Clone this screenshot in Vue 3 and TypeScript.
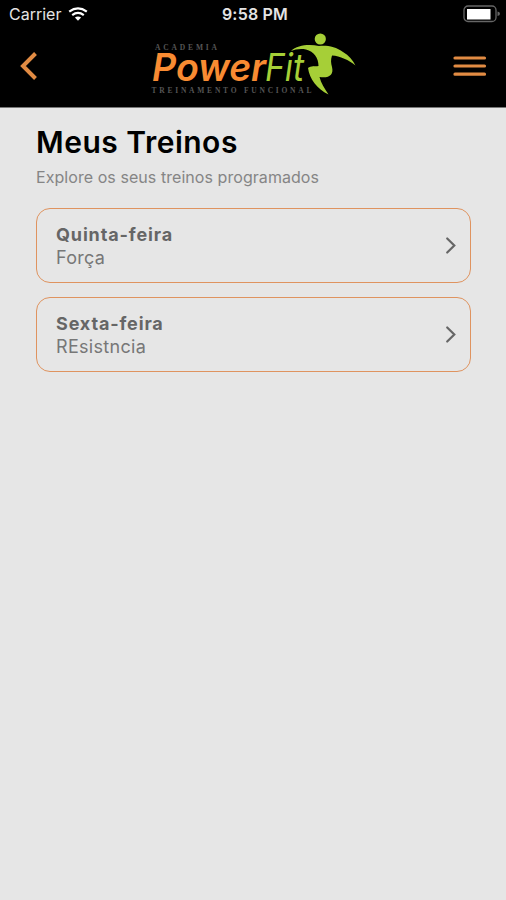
<script setup lang="ts">
interface Workout {
  day: string
  name: string
}

const workouts: Workout[] = [
  { day: 'Quinta-feira', name: 'Força' },
  { day: 'Sexta-feira', name: 'REsistncia' },
]
</script>

<template>
  <div class="screen">
    <header class="top">
      <div class="status">
        <div class="carrier">
          <span>Carrier</span>
          <svg class="wifi" width="20" height="15" viewBox="0 0 20 15">
            <path d="M1.200 4.700Q10-1.800 18.800 4.700" />
            <path d="M4.200 8.100Q10 3.700 15.800 8.100" />
            <path class="dot" d="M6.900 10.500Q10 8.300 13.100 10.500L10 13.700Z" />
          </svg>
        </div>
        <span class="clock">9:58 PM</span>
        <svg class="battery" width="38" height="18" viewBox="0 0 38 18">
          <rect class="shell" x="1" y="1" width="32" height="15.500" rx="4" />
          <rect class="charge" x="4" y="4" width="23.500" height="10.500" />
          <path class="cap" d="M34.500 6.500Q37 7 37 8.700T34.500 11Z" />
        </svg>
      </div>
      <nav class="bar">
        <button class="icon-button" aria-label="Voltar">
          <svg width="20" height="30" viewBox="0 0 20 30">
            <path class="back" d="M18.500 2.500L6 15L18.500 27.500" />
          </svg>
        </button>
        <svg class="logo" width="208" height="68" viewBox="150 30 208 68">
          <text class="small" x="155" y="49.500" textLength="62">ACADEMIA</text>
          <text class="power" x="152" y="81" textLength="114" lengthAdjust="spacingAndGlyphs">Power</text>
          <text class="fit" x="265" y="81" textLength="39" lengthAdjust="spacingAndGlyphs">Fit</text>
          <text class="small" x="151.500" y="92.500" textLength="160">TREINAMENTO FUNCIONAL</text>
          <circle class="runner" cx="320.300" cy="39" r="5.600" />
          <path class="runner" d="M291 51C297 45 309 44 319 46C326 45 336 46.500 343 52C349 55.500 352.500 60 355.500 65.500C349 60 340 56 332 55.500C330.500 60 331 63 332 67C334 75 329 78.500 319.500 77C321 83 324.500 88.500 328.500 94.500C317 89 309.500 79 308 68C311 65.500 315 66.500 318.500 66C318.500 58 314 51.500 306 49.500C300 48.500 295 49.500 291 51Z" />
        </svg>
        <button class="icon-button" aria-label="Menu">
          <svg width="34" height="30" viewBox="0 0 34 30">
            <path class="menu" d="M2 7H31.500M2 15H31.500M2 23.200H31.500" />
          </svg>
        </button>
      </nav>
    </header>
    <main class="content">
      <h1>Meus Treinos</h1>
      <p class="subtitle">Explore os seus treinos programados</p>
      <ul class="list">
        <li v-for="workout in workouts" :key="workout.day" class="card">
          <div>
            <div class="day">{{ workout.day }}</div>
            <div class="name">{{ workout.name }}</div>
          </div>
          <svg width="12" height="20" viewBox="0 0 12 20">
            <path class="chevron" d="M2.200 2.500L9.300 9.500L2.200 16.500" />
          </svg>
        </li>
      </ul>
    </main>
  </div>
</template>

<style>
body {
  margin: 0;
  background: #e6e6e6;
}
</style>

<style scoped>
.screen {
  min-height: 900px;
  background: #e6e6e6;
  font-family: Inter, "Liberation Sans", sans-serif;
}
.top {
  box-sizing: border-box;
  height: 108px;
  background: #000;
  border-bottom: 1px solid #777;
}
.status {
  display: grid;
  grid-template-columns: 1fr auto 1fr;
  align-items: center;
  height: 28px;
  padding: 0 5px 0 9px;
  color: #e4e4e4;
  font-size: 16px;
}
.carrier {
  display: flex;
  align-items: center;
  gap: 7px;
}
.wifi path {
  fill: none;
  stroke: #fff;
  stroke-width: 2.2;
}
.wifi .dot {
  fill: #fff;
  stroke: none;
}
.clock {
  font-weight: 600;
  letter-spacing: 0.2px;
}
.battery {
  justify-self: end;
}
.shell {
  fill: none;
  stroke: #666;
  stroke-width: 1.3;
}
.charge {
  fill: #fff;
}
.cap {
  fill: #666;
}
.bar {
  display: flex;
  align-items: center;
  justify-content: space-between;
  height: 76px;
  padding: 0 19px 0 17px;
}
.icon-button {
  display: flex;
  padding: 0;
  border: 0;
  background: none;
}
.logo {
  margin: -4px 0 0 18px;
}
.power,
.fit {
  font-size: 38px;
  font-style: italic;
}
.power {
  fill: #f98b32;
  font-weight: 600;
}
.fit {
  fill: #a6cf37;
  font-weight: 400;
}
.small {
  fill: #555;
  font-family: "Liberation Serif", serif;
  font-size: 7.5px;
  font-weight: 700;
}
.runner {
  fill: #a6cf37;
}
.back,
.menu {
  fill: none;
  stroke: #e18b43;
  stroke-width: 4;
}
.menu {
  stroke-width: 3.2;
  stroke-linecap: round;
}
.content {
  padding: 16px 35px 0 36px;
}
h1 {
  margin: 0;
  font-size: 30px;
  font-weight: 600;
  line-height: 36px;
  letter-spacing: 0.5px;
}
.subtitle {
  margin: 7px 0 0;
  color: #858585;
  font-size: 16px;
  line-height: 20px;
  letter-spacing: 0.06px;
}
.list {
  display: flex;
  flex-direction: column;
  gap: 14px;
  margin: 21px 0 0;
  padding: 0;
  list-style: none;
}
.card {
  box-sizing: border-box;
  display: flex;
  align-items: center;
  justify-content: space-between;
  height: 75px;
  padding: 0 13px 0 19px;
  border: 1.500px solid #df935f;
  border-radius: 14px;
  color: #666;
  font-size: 18px;
  line-height: 23px;
}
.day {
  font-weight: 700;
  letter-spacing: 0.85px;
}
.name {
  color: #777;
  letter-spacing: 0.3px;
}
.chevron {
  fill: none;
  stroke: #666;
  stroke-width: 2.2;
  stroke-linecap: round;
}
</style>
